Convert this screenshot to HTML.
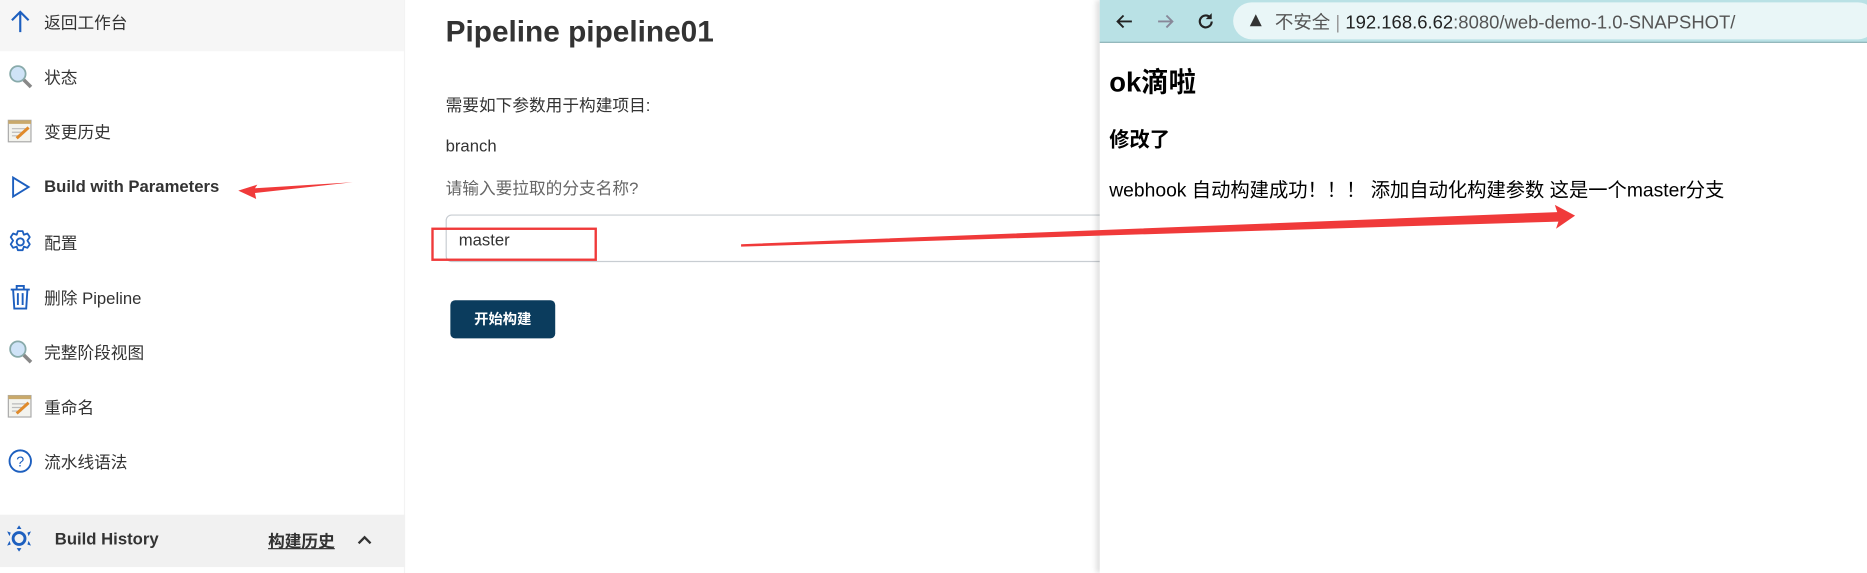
<!DOCTYPE html>
<html><head><meta charset="utf-8"><style>
html,body{margin:0;padding:0;width:1867px;height:573px;overflow:hidden;background:#fff}
#w{position:absolute;left:0;top:0;width:1567px;height:481px;transform:scale(1.19145);transform-origin:0 0;font-family:"Liberation Sans","Noto Sans CJK SC",sans-serif;color:#333}
.a{position:absolute;white-space:nowrap}
.it{position:absolute;left:37px;font-size:14px;color:#333}
.ic{position:absolute;left:6px;width:22px;height:22px}
</style></head><body><div id="w">
<div class="a" style="left:0;top:0;width:340px;height:43px;background:#f6f6f6"></div>
<div class="a" style="left:339px;top:0;width:1px;height:481px;background:#f3f3f3"></div>
<svg class="ic" style="top:7px" viewBox="0 0 22 22"><path d="M11 20V3M4 10l7-7 7 7" stroke="#1d5fbf" stroke-width="1.8" fill="none"/></svg>
<div class="it" style="top:9px">返回工作台</div>
<svg class="ic" style="top:53px" viewBox="0 0 22 22"><circle cx="9" cy="9" r="6.5" fill="#cfe3f7" stroke="#8aa" stroke-width="1.5"/><path d="M14 14l6 6" stroke="#888" stroke-width="3"/></svg>
<div class="it" style="top:55px">状态</div>
<svg class="ic" style="top:99px" viewBox="0 0 22 22"><rect x="1" y="2" width="19" height="18" fill="#f3f3ee" stroke="#aaa"/><path d="M1 2h19v3H1z" fill="#c9a96b"/><path d="M4 9h12M4 12h10M4 15h8" stroke="#bbb"/><path d="M8 17l10-9" stroke="#e08a2a" stroke-width="2.5"/></svg>
<div class="it" style="top:101px">变更历史</div>
<svg class="ic" style="top:146px" viewBox="0 0 22 22"><path d="M5 3l13 8-13 8z" stroke="#1d5fbf" stroke-width="1.6" fill="none"/></svg>
<div class="it" style="top:148px;font-weight:bold">Build with Parameters</div>
<svg class="ic" style="top:192px" viewBox="0 0 22 22"><circle cx="11" cy="11" r="3" stroke="#1d5fbf" stroke-width="1.6" fill="none"/><path d="M9 2h4l1 3 3-1 2 3-2 3 2 3-2 3-3-1-1 3H9l-1-3-3 1-2-3 2-3-2-3 2-3 3 1z" stroke="#1d5fbf" stroke-width="1.5" fill="none" stroke-linejoin="round"/></svg>
<div class="it" style="top:194px">配置</div>
<svg class="ic" style="top:238px" viewBox="0 0 22 22"><path d="M3 5h16M8 5V2h6v3M5 5l1 16h10l1-16M9 8v10M13 8v10" stroke="#1d5fbf" stroke-width="1.6" fill="none"/></svg>
<div class="it" style="top:240px">删除 Pipeline</div>
<svg class="ic" style="top:284px" viewBox="0 0 22 22"><circle cx="9" cy="9" r="6.5" fill="#cfe3f7" stroke="#8aa" stroke-width="1.5"/><path d="M14 14l6 6" stroke="#888" stroke-width="3"/></svg>
<div class="it" style="top:286px">完整阶段视图</div>
<svg class="ic" style="top:330px" viewBox="0 0 22 22"><rect x="1" y="2" width="19" height="18" fill="#f3f3ee" stroke="#aaa"/><path d="M1 2h19v3H1z" fill="#c9a96b"/><path d="M4 9h12M4 12h10M4 15h8" stroke="#bbb"/><path d="M8 17l10-9" stroke="#e08a2a" stroke-width="2.5"/></svg>
<div class="it" style="top:332px">重命名</div>
<svg class="ic" style="top:376px" viewBox="0 0 22 22"><circle cx="11" cy="11" r="9" stroke="#1d5fbf" stroke-width="1.6" fill="none"/><text x="11" y="15.5" font-size="12" text-anchor="middle" fill="#1d5fbf" font-family="Liberation Sans">?</text></svg>
<div class="it" style="top:378px">流水线语法</div>
<div class="a" style="left:0;top:432px;width:340px;height:44px;background:#f1f1f1"></div>
<svg class="ic" style="top:441px;left:5px" viewBox="0 0 22 22"><circle cx="11" cy="11" r="5" stroke="#1d5fbf" stroke-width="2.4" fill="none"/><path d="M11 0l2 3h-4zM11 22l2-3h-4zM1 5l3 1-1 3zM21 5l-3 1 1 3zM1 17l3-1-1-3zM21 17l-3-1 1-3z" fill="#1d5fbf"/></svg>
<div class="a" style="left:46px;top:444px;font-size:14px;font-weight:bold">Build History</div>
<div class="a" style="left:225px;top:444px;font-size:14px;font-weight:bold;text-decoration:underline">构建历史</div>
<svg class="a" style="left:299px;top:446px" width="14" height="14" viewBox="0 0 14 14"><path d="M2 10l5-5 5 5" stroke="#333" stroke-width="2" fill="none"/></svg>
<div class="a" style="left:374px;top:13px;font-size:25px;font-weight:bold;color:#333">Pipeline pipeline01</div>
<div class="a" style="left:374px;top:78px;font-size:14px">需要如下参数用于构建项目:</div>
<div class="a" style="left:374px;top:114px;font-size:14px">branch</div>
<div class="a" style="left:374px;top:148px;font-size:14px;color:#666">请输入要拉取的分支名称?</div>
<div class="a" style="left:374px;top:180px;width:560px;height:38px;border:1.5px solid #c8cdd2;border-radius:5px"></div>
<div class="a" style="left:385px;top:193px;font-size:14px">master</div>
<div class="a" style="left:362px;top:191px;width:135px;height:24px;border:2px solid #f03a3a"></div>
<div class="a" style="left:378px;top:252px;width:88px;height:32px;background:#0b3c5d;border-radius:4px;color:#fff;font-size:12px;font-weight:bold;text-align:center;line-height:32px">开始构建</div>
<div class="a" style="left:923px;top:0;width:644px;height:481px;background:#fff;box-shadow:-3px 0 4px rgba(0,0,0,.12)"></div>
<div class="a" style="left:923px;top:0;width:644px;height:35px;background:#b9e1e5;border-bottom:1.5px solid #8fb3b7"></div>
<div class="a" style="left:1035px;top:2px;width:540px;height:31px;background:#e9f6f7;border-radius:16px"></div>
<svg class="a" style="left:935px;top:9px" width="18" height="18" viewBox="0 0 18 18"><path d="M15 9H3M8 4L3 9l5 5" stroke="#222" stroke-width="1.6" fill="none"/></svg>
<svg class="a" style="left:969px;top:9px" width="18" height="18" viewBox="0 0 18 18"><path d="M3 9h12M10 4l5 5-5 5" stroke="#889" stroke-width="1.6" fill="none"/></svg>
<svg class="a" style="left:1003px;top:9px" width="18" height="18" viewBox="0 0 18 18"><path d="M14 9a5 5 0 1 1-1.5-3.6" stroke="#222" stroke-width="1.8" fill="none"/><path d="M14 2v5h-5z" fill="#222"/></svg>
<svg class="a" style="left:1048px;top:11px" width="12" height="12" viewBox="0 0 12 12"><path d="M6 1l5 10H1z" fill="#333"/></svg>
<div class="a" style="left:1070px;top:7px;font-size:15.5px;color:#555">不安全 <span style="color:#999">|</span> <span style="color:#222">192.168.6.62</span>:8080/web-demo-1.0-SNAPSHOT/</div>
<div class="a" style="left:931px;top:50px;font-size:23px;font-weight:bold;color:#000">ok滴啦</div>
<div class="a" style="left:931px;top:103px;font-size:17px;font-weight:bold;color:#000">修改了</div>
<div class="a" style="left:931px;top:146px;font-size:16.2px;color:#000">webhook 自动构建成功！！！ 添加自动化构建参数 这是一个master分支</div>
<svg class="a" style="left:0;top:0" width="1567" height="481"><path d="M296 153 L214 158 L216 155 L200 160 L215 167 L214 162 Z" fill="#f03a3a"/><path d="M622 207 L1308 186 L1306 192 L1322 181 L1305 172 L1307 178 L622 205 Z" fill="#f03a3a"/></svg>
</div></body></html>
